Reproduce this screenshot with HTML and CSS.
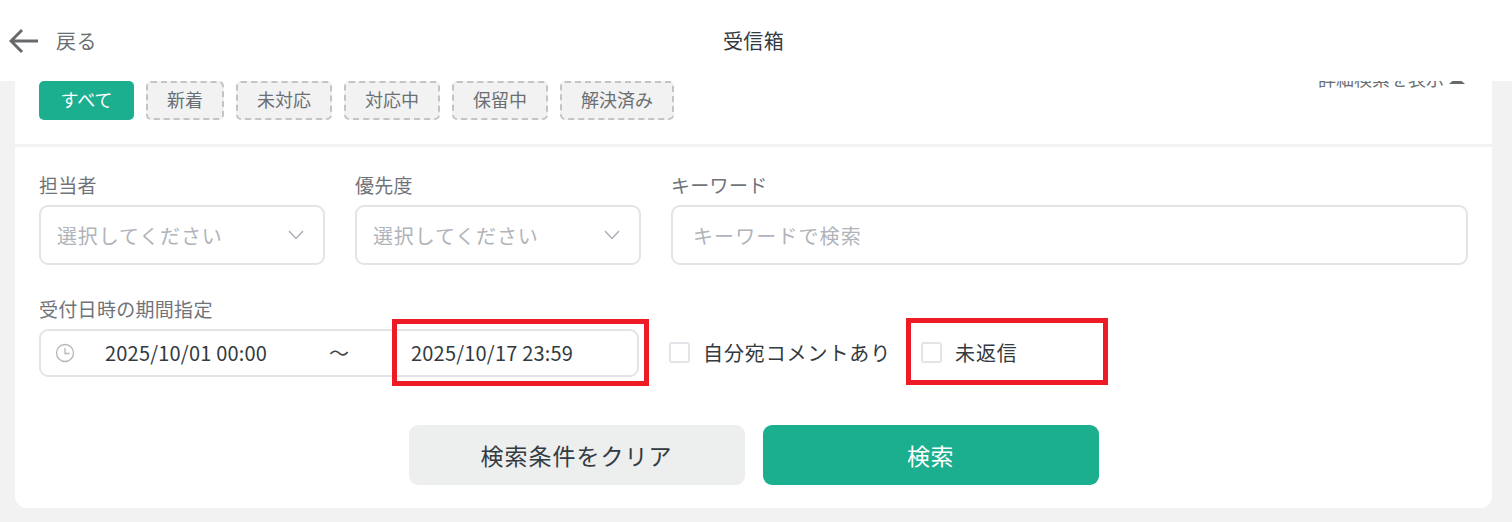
FILE: index.html
```html
<!DOCTYPE html>
<html lang="ja">
<head>
<meta charset="utf-8">
<title>受信箱</title>
<link rel="stylesheet" href="styles.css">
</head>
<body>
<header class="topbar">
  <a class="back">
    <svg class="back-icon" width="30" height="26" viewBox="0 0 30 26"><path d="M13 2 L2 13 L13 24 M3 13 H29" fill="none" stroke="#666a6c" stroke-width="3"/></svg>
    <span>戻る</span>
  </a>
  <h1 class="title">受信箱</h1>
</header>
<main class="card">
  <div class="status-row">
    <div class="chips">
      <button class="chip chip-active">すべて</button>
      <button class="chip">新着</button>
      <button class="chip">未対応</button>
      <button class="chip">対応中</button>
      <button class="chip">保留中</button>
      <button class="chip">解決済み</button>
    </div>
    <a class="detail-link">詳細検索を表示<span class="caret"></span></a>
  </div>
  <div class="divider"></div>
  <form class="form">
    <div class="row-fields">
      <div class="field field-select">
        <label class="label">担当者</label>
        <div class="control select"><span>選択してください</span><svg width="16" height="10" viewBox="0 0 16 10"><path d="M1 1 L8 8.5 L15 1" fill="none" stroke="#a8acb2" stroke-width="1.3"/></svg></div>
      </div>
      <div class="field field-select">
        <label class="label">優先度</label>
        <div class="control select"><span>選択してください</span><svg width="16" height="10" viewBox="0 0 16 10"><path d="M1 1 L8 8.5 L15 1" fill="none" stroke="#a8acb2" stroke-width="1.3"/></svg></div>
      </div>
      <div class="field field-grow">
        <label class="label">キーワード</label>
        <div class="control keyword"><span>キーワードで検索</span></div>
      </div>
    </div>
    <div class="row-date">
      <div class="field">
        <label class="label label-date">受付日時の期間指定</label>
        <div class="date-range">
          <svg class="clock" width="20" height="20" viewBox="0 0 20 20"><circle cx="10" cy="10" r="8.5" fill="none" stroke="#b4b6ba" stroke-width="1.3"/><path d="M10 5 V10.5 H14.5" fill="none" stroke="#b4b6ba" stroke-width="1.3"/></svg>
          <span class="date date-start">2025/10/01 00:00</span>
          <span class="tilde">～</span>
          <span class="date">2025/10/17 23:59</span>
        </div>
      </div>
      <label class="check check-first"><span class="box"></span>自分宛コメントあり</label>
      <label class="check check-second"><span class="box"></span>未返信</label>
    </div>
    <div class="actions">
      <button type="button" class="btn btn-clear">検索条件をクリア</button>
      <button type="button" class="btn btn-search">検索</button>
    </div>
  </form>
  <div class="mark mark-date"></div>
  <div class="mark mark-unreplied"></div>
</main>
</body>
</html>
```
FILE: styles.css
```css
* { box-sizing: border-box; }
html, body { height: 522px; overflow: hidden; }
body {
  margin: 0;
  background: #f2f2f2;
  font-family: "Noto Sans CJK JP", "Noto Sans", sans-serif;
  color: #333a40;
}
.topbar {
  position: absolute;
  top: 0; left: 0; right: 0;
  height: 81px;
  padding-right: 5px;
  background: #fff;
  display: flex;
  align-items: center;
  justify-content: center;
  z-index: 2;
}
.back {
  position: absolute;
  left: 9px;
  top: 27px;
  display: flex;
  align-items: center;
  gap: 17px;
  font-size: 20px;
  line-height: 28px;
  letter-spacing: 0.5px;
  color: #6b6f72;
}
.title {
  margin: 0;
  font-size: 20px;
  font-weight: 400;
  line-height: 28px;
  letter-spacing: 0.4px;
  color: #333a40;
}
.card {
  position: relative;
  width: 1477px;
  height: 508px;
  margin-left: 15px;
  padding-top: 70px;
  background: #fff;
  border-radius: 0 0 12px 12px;
}
.status-row {
  display: flex;
  justify-content: space-between;
  align-items: flex-start;
  padding: 0 24px;
  height: 74px;
}
.chips { display: flex; gap: 12px; margin-top: 11px; }
.chip {
  height: 39px;
  padding: 0 19px 4px;
  font: inherit;
  font-size: 18px;
  line-height: 24px;
  color: #6b6f72;
  background: #f2f2f2;
  border: 2px dashed #c4c4c4;
  border-radius: 5px;
  white-space: nowrap;
}
.chip-active {
  padding: 0 21px 4px 21px;
  width: 95px;
  color: #fff;
  background: #1bae8f;
  border: 0;
}
.detail-link {
  display: flex;
  align-items: center;
  gap: 5px;
  margin: -4px 3px 0 0;
  font-size: 18px;
  line-height: 24px;
  color: #6b6f72;
}
.caret {
  width: 0; height: 0;
  margin-top: 4px;
  border-left: 8px solid transparent;
  border-right: 8px solid transparent;
  border-bottom: 7px solid #666a6c;
}
.divider { height: 3px; background: #f2f2f2; }
.form { padding: 26px 24px 0; }
.row-fields { display: flex; gap: 30px; }
.field { display: flex; flex-direction: column; }
.field-select { width: 286px; }
.field-grow { width: 797px; }
.label {
  font-size: 19px;
  line-height: 24px;
  letter-spacing: 0.3px;
  color: #70747a;
  margin-bottom: 8px;
}
.control {
  height: 60px;
  display: flex;
  align-items: center;
  border: 2px solid #e3e4e8;
  border-radius: 9px;
  font-size: 20px;
  color: #b0b4ba;
}
.select { justify-content: space-between; padding: 0 19px 0 16px; }
.select span { letter-spacing: 0.85px; }
.keyword { padding-left: 20px; letter-spacing: 1.1px; }
.row-date { display: flex; align-items: flex-end; margin-top: 32px; height: 80px; }
.label-date { margin-bottom: 8px; }
.date-range {
  width: 600px;
  height: 48px;
  display: flex;
  align-items: center;
  padding-left: 14px;
  border: 2px solid #e3e4e8;
  border-radius: 9px;
  font-size: 20px;
  letter-spacing: 0.2px;
  color: #333a40;
}
.date, .tilde { margin-bottom: 2px; }
.clock { flex: none; margin-right: 30px; }
.date-start { width: 224px; }
.tilde { width: 82px; color: #444; }
.check {
  display: flex;
  align-items: center;
  height: 48px;
  padding-bottom: 2px;
  font-size: 20px;
  letter-spacing: 0.9px;
  color: #333a40;
  white-space: nowrap;
}
.check-first { margin-left: 30px; width: 252px; }
.box {
  width: 21px; height: 21px;
  margin-right: 13px;
  border: 2px solid #e3e4e8;
  border-radius: 3px;
  background: #fff;
}
.actions { display: flex; justify-content: center; gap: 18px; margin-top: 48px; }
.btn {
  width: 336px;
  height: 60px;
  padding: 0;
  font: inherit;
  font-size: 23px;
  border: 0;
  border-radius: 9px;
}
.btn-clear { background: #edeeee; color: #333a40; letter-spacing: 1px; }
.btn-search { background: #1bae8f; color: #fff; letter-spacing: 0.5px; }
.mark {
  position: absolute;
  border: 5px solid #ed1c24;
}
.mark-date { left: 377px; top: 319px; width: 257px; height: 67px; }
.mark-unreplied { left: 891px; top: 318px; width: 202px; height: 67px; }
```
